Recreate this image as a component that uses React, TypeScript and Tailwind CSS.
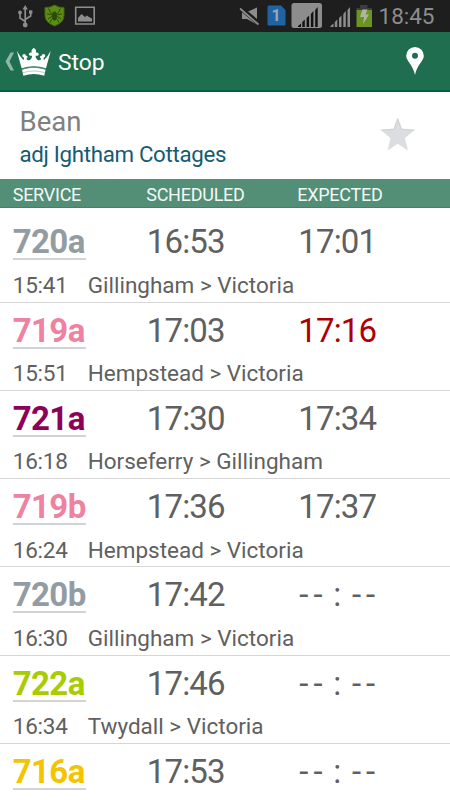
type Departure = {
  service: string
  color: string
  scheduled: string
  expected?: string
  late?: boolean
  start?: string
  route?: string
}

const departures: Departure[] = [
  { service: '720a', color: 'text-[#949ca3]', scheduled: '16:53', expected: '17:01', start: '15:41', route: 'Gillingham > Victoria' },
  { service: '719a', color: 'text-[#ee82a0]', scheduled: '17:03', expected: '17:16', late: true, start: '15:51', route: 'Hempstead > Victoria' },
  { service: '721a', color: 'text-[#8f0058]', scheduled: '17:30', expected: '17:34', start: '16:18', route: 'Horseferry > Gillingham' },
  { service: '719b', color: 'text-[#ee82a0]', scheduled: '17:36', expected: '17:37', start: '16:24', route: 'Hempstead > Victoria' },
  { service: '720b', color: 'text-[#949ca3]', scheduled: '17:42', start: '16:30', route: 'Gillingham > Victoria' },
  { service: '722a', color: 'text-[#a8cc00]', scheduled: '17:46', start: '16:34', route: 'Twydall > Victoria' },
  { service: '716a', color: 'text-[#f3c500]', scheduled: '17:53' },
]

function StatusBar() {
  return (
    <div className="flex h-8 shrink-0 bg-[#1e1e1e]">
      <svg width="450" height="32" viewBox="0 0 450 32">
        {/* usb */}
        <path d="M25.200 8V24M25.200 21.500L20 18V13M25.200 19.500L30.700 16V12" stroke="#8d8d8d" fill="none" strokeWidth="1.700" />
        <path d="M25.200 5l2.700 4.500h-5.400z" fill="#8d8d8d" />
        <circle cx="25.200" cy="25" r="2.400" fill="#8d8d8d" />
        <circle cx="20" cy="12.500" r="1.900" fill="#8d8d8d" />
        <path d="M29 10.300h3.400v3.400H29z" fill="#8d8d8d" />
        {/* antivirus shield */}
        <path d="M54.500 5q4.500 3 9.500 2.500v8q0 7-9.500 10.500Q45 22.500 45 15.500v-8Q50 8 54.500 5z" fill="#5c8c14" stroke="#3d6a0c" />
        <ellipse cx="54.500" cy="16" rx="2.300" ry="4.500" fill="#294a0a" />
        <path d="M48.500 8.500l2 4 3 2M60.500 8.500l-2 4-3 2M47 14l4 .5 2 1.500M62 14l-4 .5-2 1.500M48 19l3-2 3-.5M61 19l-3-2-3-.5M50 22.500l1.500-3 2-1.500M59 22.500l-1.500-3-2-1.500" fill="none" stroke="#294a0a" strokeWidth="1" />
        {/* picture */}
        <path d="M75.700 7.200h18.500v16.800H75.700z" fill="none" stroke="#8d8d8d" strokeWidth="1.600" />
        <path d="M78 21.500v-3.500l3.500-4 3.500 3 2-1.500 2 1.500 3 1.500v3z" fill="#8d8d8d" />
        {/* muted speaker */}
        <path d="M242 12h5l10-4.500v17l-10-5.500h-5z" fill="#8d8d8d" />
        <path d="M240.500 8l18.500 15.500" stroke="#1e1e1e" strokeWidth="4.500" />
        <path d="M240 8.500l18.500 16" stroke="#8d8d8d" strokeWidth="1.700" />
        {/* sim card */}
        <path d="M269 5.500h12l4.500 4.500V24.500q0 1-1 1H268.500q-1 0-1-1V7q0-1.500 1.500-1.500z" fill="#1f63a3" />
        {/* boxed signal */}
        <rect x="291.500" y="3" width="30.500" height="25" rx="2.500" fill="#8d8d8d" />
        <path d="M298 27v-1l3-2.500V27zM302.300 27v-5l2.500-2.500V27zM306.600 27v-9l2.500-2.500V27zM310.900 27V14l2.500-3v16zM315.200 27V10l2.500-3v20z" fill="#111" />
        {/* signal */}
        <path d="M330.500 27v-1l3-2.500V27zM334.800 27v-5l2.500-2.500V27zM339 27v-9l2.500-2.500V27zM343.300 27V14l2.500-3v16zM347.500 27V10l2.500-3v20z" fill="#8d8d8d" />
        {/* battery */}
        <path d="M360 5h7.500v3h4.500v3h-15.500V8h3.500z" fill="#3c3c3c" />
        <path d="M356.500 10H372V27h-15.500z" fill="#6b9422" />
        <path d="M362.500 9.500h5l-2 5h3.500l-6 9.500 1-7h-4z" fill="#aeb5a3" />
        <text x="276" y="21" textAnchor="middle" fontFamily="Roboto" fontSize="16" fontWeight="700" fill="#9aa7b3">1</text>
        <text x="378.500" y="23.500" fontFamily="Roboto" fontSize="22.500" fill="#8d8d8d" textLength="56">18:45</text>
      </svg>
    </div>
  )
}

function ActionBar() {
  return (
    <div className="flex h-[60px] shrink-0 items-center border-b-2 border-[#006241] bg-[#1e6e4f] text-white">
      <svg width="58" height="58" viewBox="0 32 58 58">
        <path d="M10.500 52.500H14L9.500 61.500l4.500 9h-3.500L5.500 61.500z" fill="#8eb7a7" />
        {/* crown */}
        <path d="M16.800 50.800q2.500 5 6.700 9.200 1-1 .3-2.500-1.500-.2-1.500-1.700 0-1.700 2-1.700 1.400 0 1.600 1.700 1.500-.2 1.700 1.300 0 1.300-1.300 1.700 1.700 2.700 4.200.7 2-2 1.500-3.800-3 .6-3.200-1.500.1-2 3-1.600-.8-2 .2-3.200l1.800-1.600 1.800 1.600q1 1.200.2 3.200 2.900-.4 3 1.600-.2 2.100-3.200 1.500-.5 1.800 1.500 3.800 2.500 2 4.200-.7-1.300-.4-1.300-1.700.2-1.500 1.700-1.300.2-1.700 1.600-1.700 2 0 2 1.700 0 1.500-1.500 1.700-.7 1.500.3 2.500 4.200-4.200 6.700-9.200l-4.800 17.400q-12.400-4-24.400 0z" fill="#fff" />
        <path d="M22 69.700q11.800-3.800 23.600 0l-1.400 6q-10.400-3.200-20.800 0z" fill="#fff" />
        <path d="M21.500 69.300q12.300-4 24.600 0M23 72.600q10.800-3.200 21.600 0" fill="none" stroke="#7fae9b" strokeWidth=".6" />
      </svg>
      <span className="grow pt-[3px] text-[22.800px] leading-7">Stop</span>
      <svg width="22" height="32" viewBox="0 0 22 32" className="mr-6">
        <path d="M11 2a8.800 8.800 0 0 0-8.800 8.800C2.200 16 9 20 11 30c2-10 8.800-14 8.800-19.200A8.800 8.800 0 0 0 11 2zm0 5.700a3 3 0 1 1 0 6 3 3 0 0 1 0-6z" fill="#fff" />
      </svg>
    </div>
  )
}

function DepartureRow({ d }: { d: Departure }) {
  return (
    <div className="h-[88.300px] shrink-0 border-b border-[#d6d6d6] pl-[12.700px] text-[#606060]">
      <div className="flex h-[56.500px] pt-[7px] text-[33px] leading-[42px] tracking-[-0.8px]">
        <div className="w-[134px]">
          <div className={`h-[39px] w-[73px] border-b-2 border-[#d3d3d3] font-bold tracking-[-0.6px] ${d.color}`}>{d.service}</div>
        </div>
        <div className="w-[151.500px]">{d.scheduled}</div>
        {d.expected ? (
          <div className={d.late ? 'text-[#ae0000]' : ''}>{d.expected}</div>
        ) : (
          <div className="pl-[1px] tracking-[5.100px] [word-spacing:-7.700px]">-- : --</div>
        )}
      </div>
      {d.start && (
        <div className="flex text-[22.500px] leading-7">
          <div className="w-[75px] tracking-[-0.2px]">{d.start}</div>
          <div>{d.route}</div>
        </div>
      )}
    </div>
  )
}

export default function App() {
  return (
    <div className="flex h-[800px] w-[450px] flex-col overflow-hidden bg-white font-['Roboto',sans-serif]">
      <StatusBar />
      <ActionBar />
      <div className="flex h-[87px] shrink-0 justify-between pl-[19.500px] pr-[34.500px]">
        <div>
          <div className="pt-[12px] text-[27.600px] leading-9 text-[#808080]">Bean</div>
          <div className="text-[22.300px] leading-7 tracking-[-0.320px] text-[#145b73]">adj Ightham Cottages</div>
        </div>
        <svg width="36" height="36" viewBox="0 0 36 36" className="mt-[25px]">
          <path d="M17.700 1.500l4 10.700 12.800.8-9.700 8.200 3.200 12.300-10.300-6.700-10 6.700 2.800-12.300-9.700-8.200 13-.8z" fill="#dcdde0" />
          <path d="M.8 13l13-.8 3.900-10.700 4 10.700 12.800.8" fill="none" stroke="#b9babd" strokeWidth=".6" />
        </svg>
      </div>
      <div className="flex h-[29px] shrink-0 border-b border-[#41836a] bg-[#528f76] pl-[12.700px] text-[18px] leading-[31px] tracking-[-0.250px] text-[#f4f7f6]">
        <div className="w-[133.500px]">SERVICE</div>
        <div className="w-[151px]">SCHEDULED</div>
        <div>EXPECTED</div>
      </div>
      <div className="flex flex-col pt-[6.300px]">
        {departures.map((d) => (
          <DepartureRow key={d.scheduled} d={d} />
        ))}
      </div>
    </div>
  )
}
